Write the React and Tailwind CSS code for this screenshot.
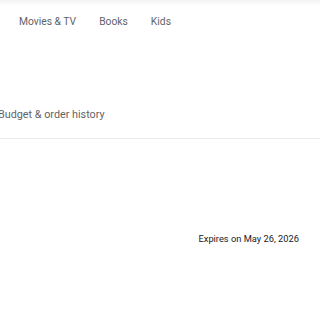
export default function App() {
  return (
    <div className="w-[320px] h-[320px] bg-white overflow-hidden" style={{ fontFamily: "Roboto, 'Open Sans', sans-serif" }}>
      <div className="h-[6px] bg-gradient-to-b from-[#f4f4f4] to-white" />
      <nav className="flex items-center gap-[23px] pl-[19px] h-[32px] text-[10.3px] text-[#5f6368]">
        <span>Movies &amp; TV</span>
        <span>Books</span>
        <span>Kids</span>
      </nav>
      <div className="h-[69px]" />
      <div className="-ml-[2px] h-[16px] flex items-center text-[10.8px] text-[#5f6368]">
        Budget &amp; order history
      </div>
      <div className="h-[15px]" />
      <div className="h-px bg-[#ebebeb]" />
      <div className="h-[93px]" />
      <div className="flex justify-end pr-[21px] text-[9.3px] text-[#202124]">
        Expires on May 26, 2026
      </div>
    </div>
  );
}
